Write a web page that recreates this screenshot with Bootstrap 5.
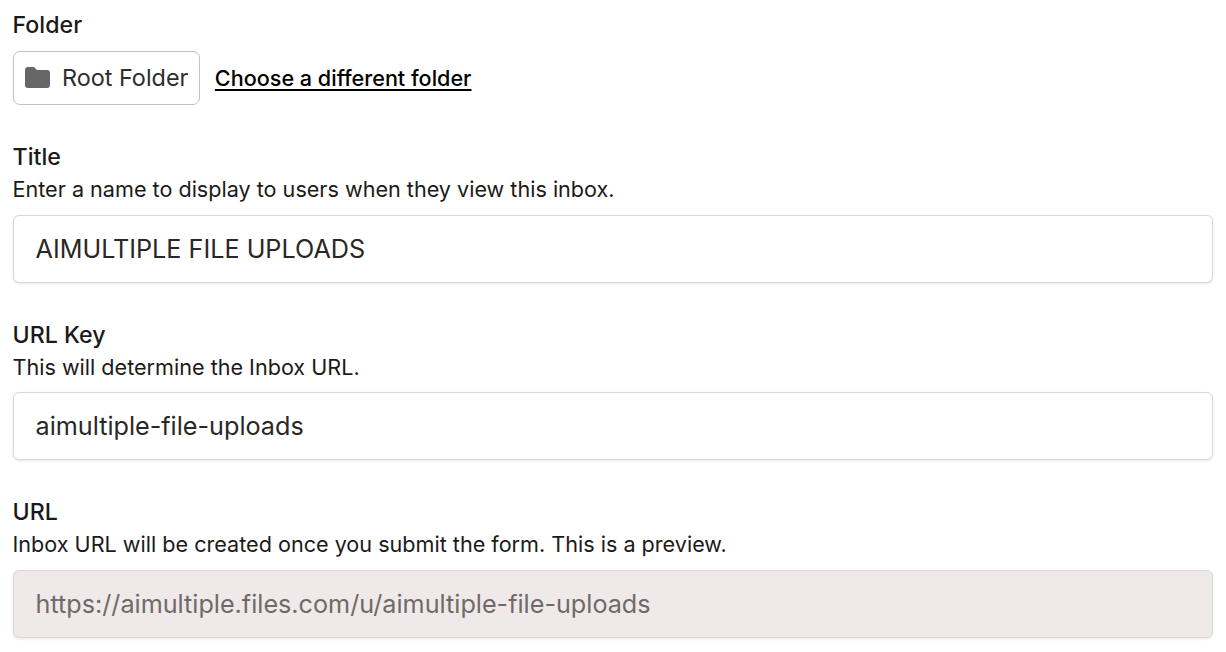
<!DOCTYPE html>
<html lang="en"><head><meta charset="utf-8">
<link href="https://cdn.jsdelivr.net/npm/bootstrap@5.3.0/dist/css/bootstrap.min.css" rel="stylesheet">
<style>
html,body{background:#fff;overflow:hidden}
body{font-family:Inter,"Liberation Sans",sans-serif;color:#1c1a19;padding:10.4px 13px 0 13px;width:1226px;height:652px}
.fld-label{font-size:23.2px;line-height:30px;font-weight:450;margin:0 0 2.05px -.5px}
.fld-help{font-size:21.6px;line-height:30px;margin:0 0 10.45px -.5px}
.fld-box{height:68px;font-size:25.2px;padding:0 21.5px;border:1px solid #dbd8d6;border-radius:6px;color:#2a2725;box-shadow:0 1px 3px rgba(0,0,0,.09)}
.fld-box:disabled{background:#efe9e9;color:#6f6a67;opacity:1}
.folder-chip{height:54px;border:1px solid #c4c2c1;border-radius:7px;padding:0 11px;font-size:23.4px;color:#2f2d2c;gap:12px}
.folder-link{color:#000;font-size:21.6px;font-weight:450;text-underline-offset:3px;margin-left:14.5px}
.folder-head{margin-bottom:10.6px}
.folder-row{margin-bottom:37.4px}
.sec-gap{margin-bottom:37px}
</style></head><body>
<div>
<p class="fld-label folder-head">Folder</p>
<div class="d-flex align-items-center folder-row">
<div class="folder-chip d-flex align-items-center"><svg width="25" height="21" viewBox="0 0 25 21"><path fill="#666" d="M3 0h6l3 3h10a3 3 0 0 1 3 3v12a3 3 0 0 1-3 3H3a3 3 0 0 1-3-3V3a3 3 0 0 1 3-3z"/></svg><span>Root Folder</span></div>
<a href="#" class="folder-link">Choose a different folder</a>
</div></div>
<div class="sec-gap"><p class="fld-label">Title</p><p class="fld-help">Enter a name to display to users when they view this inbox.</p>
<input class="form-control fld-box" value="AIMULTIPLE FILE UPLOADS"></div>
<div class="sec-gap"><p class="fld-label">URL Key</p><p class="fld-help">This will determine the Inbox URL.</p>
<input class="form-control fld-box" value="aimultiple-file-uploads"></div>
<div><p class="fld-label">URL</p><p class="fld-help">Inbox URL will be created once you submit the form. This is a preview.</p>
<input class="form-control fld-box" disabled value="https://aimultiple.files.com/u/aimultiple-file-uploads"></div>
<script src="https://cdn.jsdelivr.net/npm/bootstrap@5.3.0/dist/js/bootstrap.bundle.min.js"></script>
</body></html>
